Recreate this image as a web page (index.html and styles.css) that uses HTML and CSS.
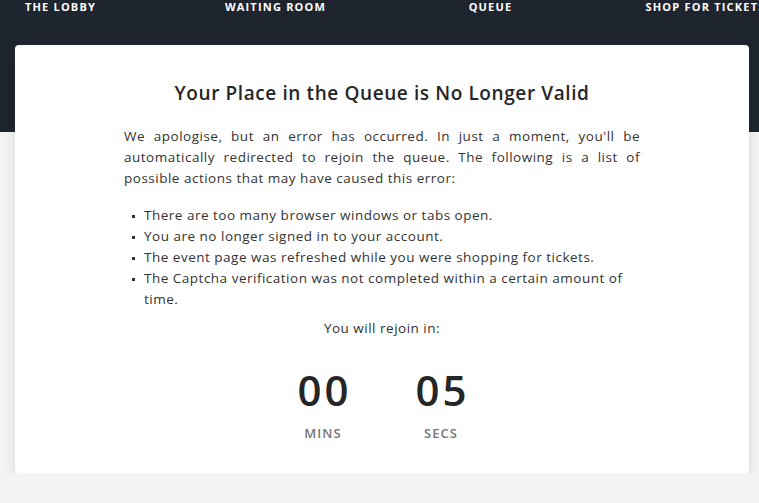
FILE: index.html
```html
<!DOCTYPE html>
<html>
<head lang="en">
    <meta charset="UTF-8">
    <title>Queue</title>
    <link rel="stylesheet" href="styles.css">
</head>
<body>
<div class="top">
    <ul class="steps">
        <li>The Lobby</li>
        <li>Waiting Room</li>
        <li>Queue</li>
        <li>Shop for Tickets</li>
    </ul>
</div>
<div class="card">
    <h1 class="title">Your Place in the Queue is No Longer Valid</h1>
    <p class="intro">We apologise, but an error has occurred. In just a moment, you'll be automatically redirected to rejoin the queue. The following is a list of possible actions that may have caused this error:</p>
    <ul class="reasons">
        <li>There are too many browser windows or tabs open.</li>
        <li>You are no longer signed in to your account.</li>
        <li>The event page was refreshed while you were shopping for tickets.</li>
        <li>The Captcha verification was not completed within a certain amount of time.</li>
    </ul>
    <p class="rejoin">You will rejoin in:</p>
    <div class="timer">
        <div class="unit">
            <div class="num">00</div>
            <div class="label">Mins</div>
        </div>
        <div class="unit">
            <div class="num">05</div>
            <div class="label">Secs</div>
        </div>
    </div>
</div>
</body>
</html>
```

FILE: styles.css
```css
*{
    margin: 0;
    padding: 0;
    box-sizing: border-box;
}
body{
    background: #f4f4f4;
    font-family: "Open Sans", Lato, sans-serif;
    color: #2b2b2b;
    overflow: hidden;
}
ul,li{
    list-style: none;
}
.top{
    height: 132px;
    background: #1f252f;
    overflow: hidden;
}
.steps{
    display: flex;
    margin-left: -47px;
    padding-top: 1px;
    white-space: nowrap;
}
.steps li{
    flex: 0 0 215px;
    text-align: center;
    color: #fff;
    font-size: 11px;
    font-weight: 700;
    letter-spacing: 1.2px;
    line-height: 11px;
    text-transform: uppercase;
}
.card{
    width: 734px;
    margin: -87px 0 0 15px;
    padding: 36px 0 31px;
    background: #fff;
    border-radius: 4px;
    box-shadow: 0 4px 14px rgba(0,0,0,0.12);
}
.title{
    font-size: 19px;
    line-height: 24px;
    font-weight: 600;
    text-align: center;
    color: #262626;
    letter-spacing: 0.6px;
}
.intro,.reasons,.rejoin{
    width: 516px;
    margin: 0 auto;
    font-size: 13.5px;
    line-height: 21px;
    color: #333;
    letter-spacing: 0.5px;
}
.intro{
    margin-top: 21px;
    text-align: justify;
}
.reasons{
    margin-top: 16px;
    padding-left: 20px;
}
.reasons li{
    position: relative;
}
.reasons li:before{
    content: "";
    position: absolute;
    left: -12px;
    top: 10px;
    width: 3px;
    height: 3px;
    background: #333;
}
.rejoin{
    margin-top: 8px;
    text-align: center;
}
.timer{
    display: flex;
    justify-content: center;
    margin-top: 27px;
}
.unit{
    width: 118px;
    text-align: center;
}
.num{
    font-size: 42px;
    line-height: 48px;
    font-weight: 600;
    color: #262626;
    letter-spacing: 3px;
    text-indent: 3px;
}
.label{
    margin-top: 10px;
    font-size: 13px;
    line-height: 18px;
    font-weight: 600;
    color: #777;
    letter-spacing: 1px;
    text-transform: uppercase;
}
```
